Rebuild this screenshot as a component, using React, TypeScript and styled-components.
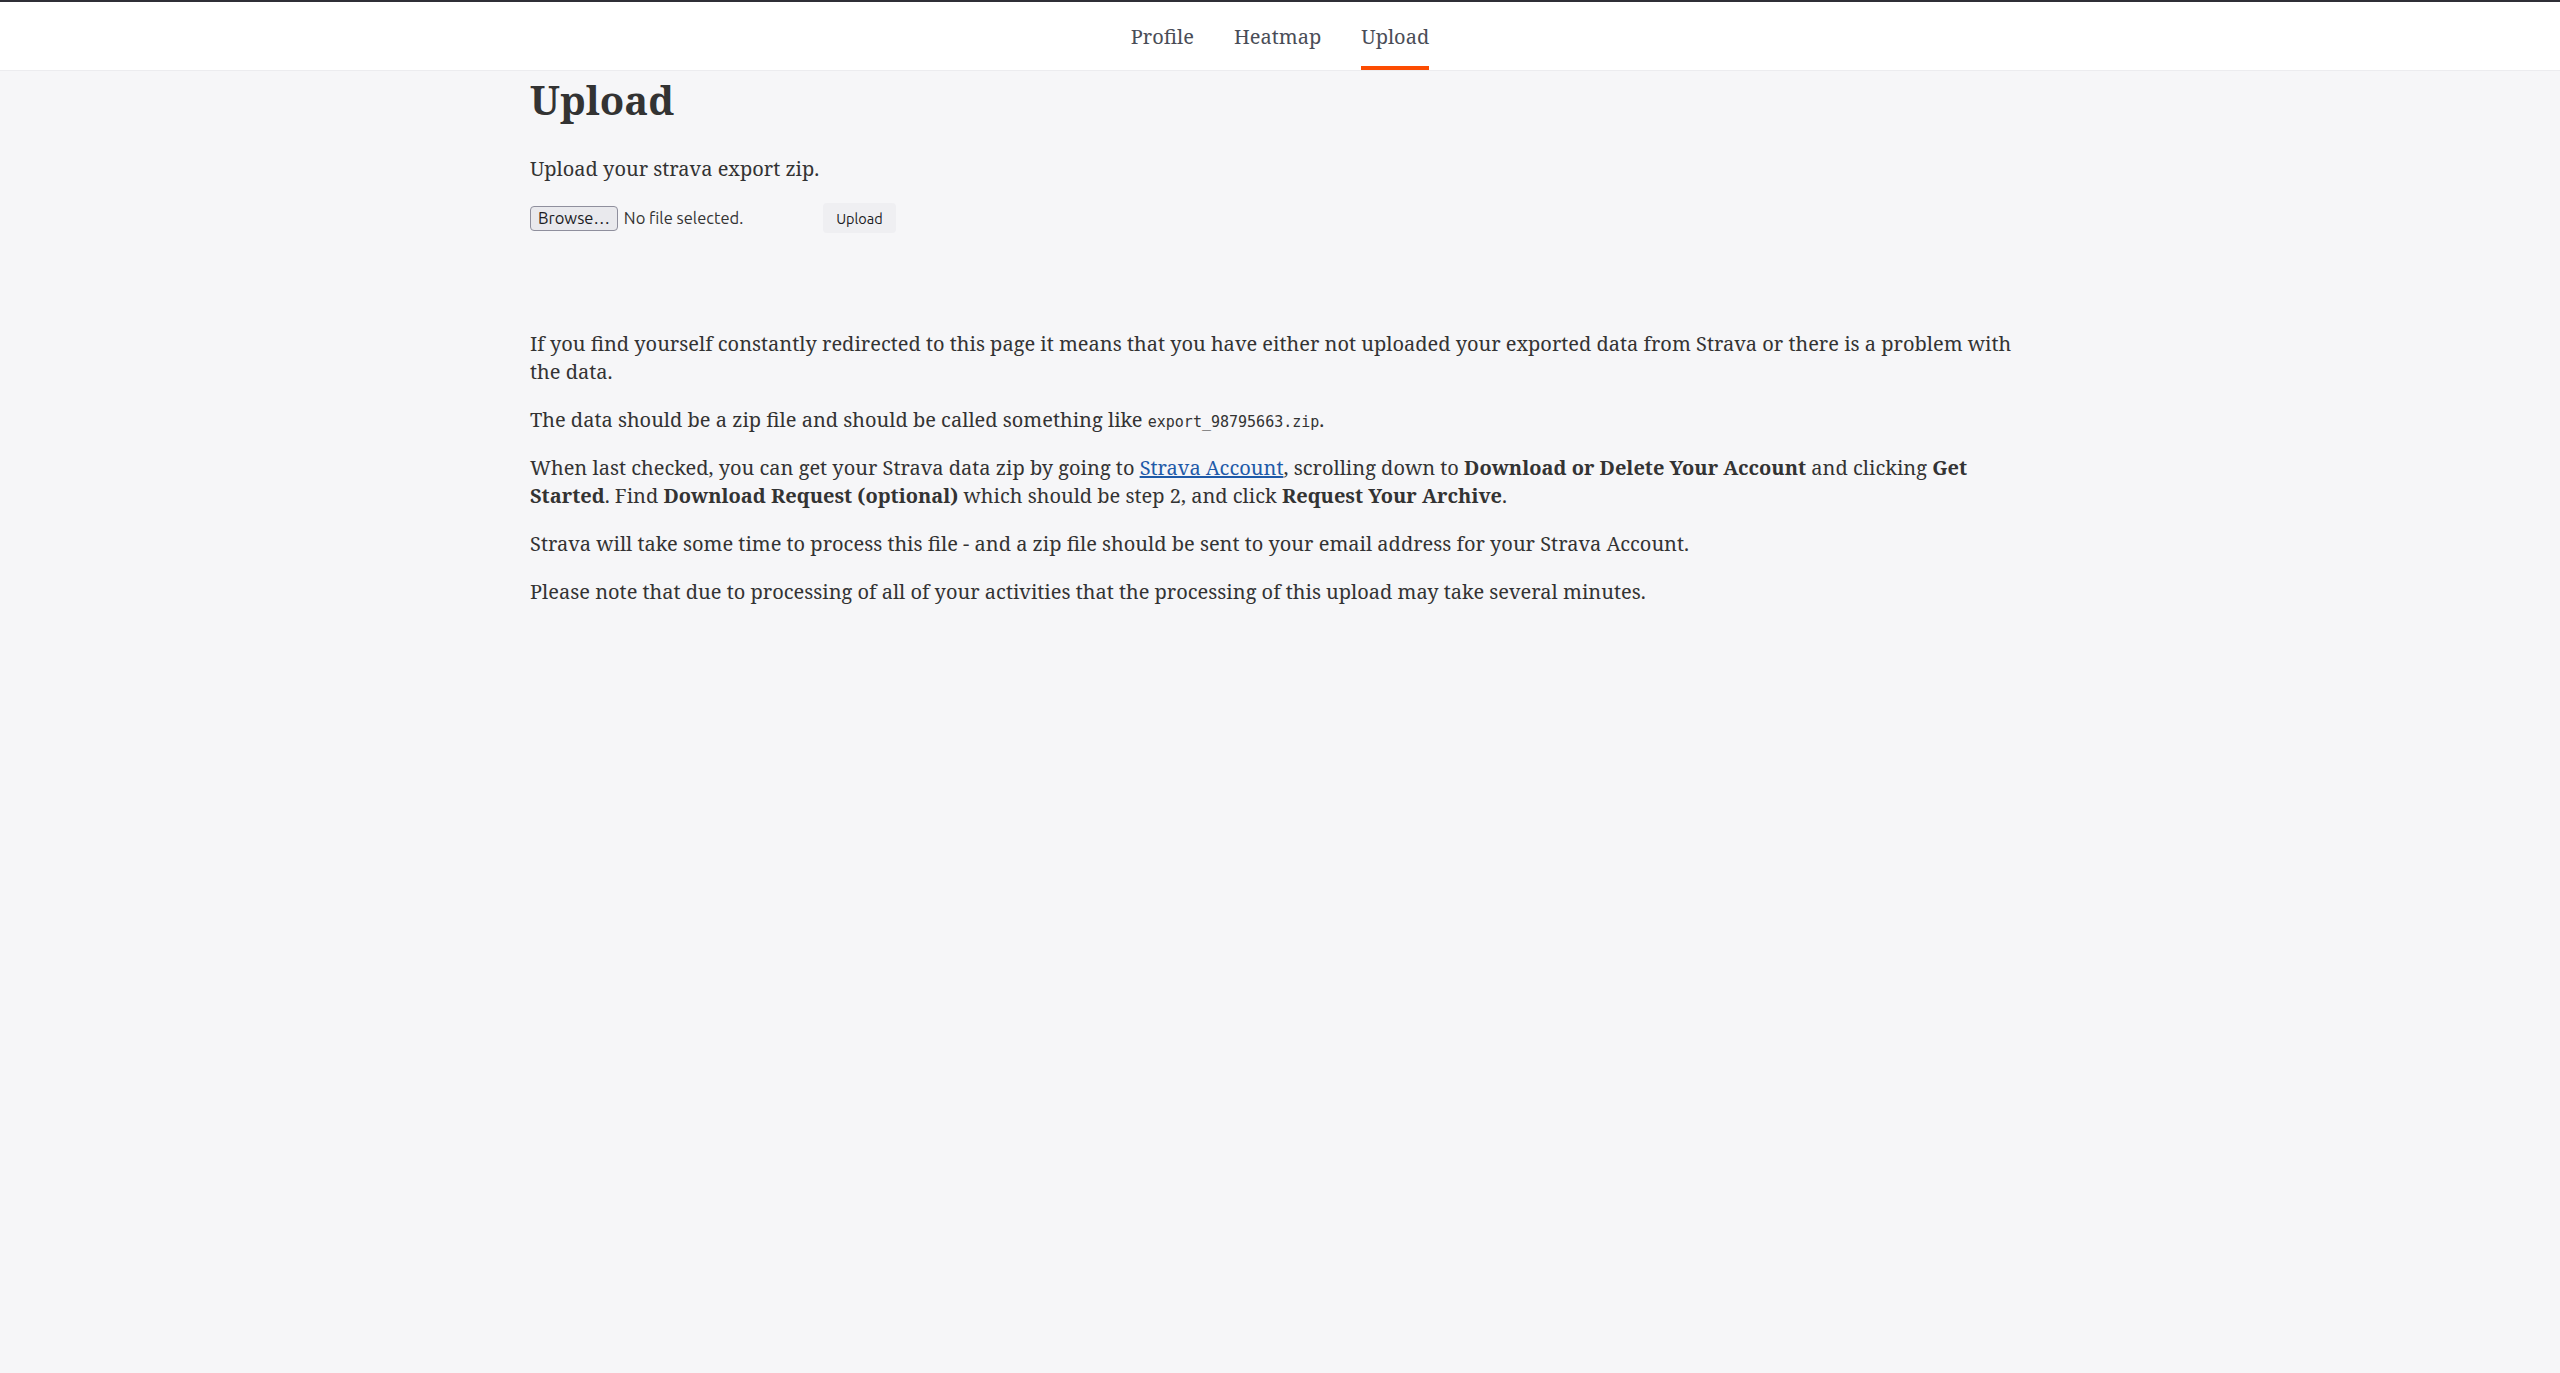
import React from "react";
import styled, { createGlobalStyle } from "styled-components";

const GlobalStyle = createGlobalStyle`
  html, body {
    margin: 0;
    padding: 0;
    background: #f6f6f8;
  }
  body {
    font-family: "Noto Serif", "DejaVu Serif", "Liberation Serif", serif;
    color: #333;
  }
`;

const Page = styled.div`
  min-height: 1373px;
  background: #f6f6f8;
`;

const NavBar = styled.nav`
  background: #ffffff;
  border-top: 2px solid #2f2f36;
  border-bottom: 1px solid #ececef;
  height: 68px;
  display: flex;
  justify-content: center;
  align-items: stretch;
  gap: 40px;
`;

const NavItem = styled.a<{ $active?: boolean }>`
  display: flex;
  align-items: center;
  font-size: 20px;
  color: #4a4d57;
  text-decoration: none;
  border-bottom: 4px solid ${(p) => (p.$active ? "#fc4c02" : "transparent")};
  padding-top: 4px;
  box-sizing: border-box;
`;

const Main = styled.main`
  max-width: 1500px;
  margin: 0 auto;
`;

const Title = styled.h1`
  font-size: 40px;
  font-weight: 700;
  line-height: 57px;
  margin: 0 0 27px 0;
  color: #333;
`;

const Intro = styled.p`
  font-size: 20px;
  line-height: 28px;
  margin: 0 0 20px 0;
`;

const UploadForm = styled.form`
  display: flex;
  align-items: center;
  height: 30px;
  margin-bottom: 97px;
`;

const FileField = styled.label`
  display: flex;
  align-items: center;
  gap: 6px;
  width: 293px;
  font-family: "Ubuntu", "Noto Sans", "Open Sans", sans-serif;
  font-size: 16.5px;
  color: #333;
`;

const BrowseButton = styled.span`
  display: inline-flex;
  align-items: center;
  height: 25px;
  box-sizing: border-box;
  padding: 0 7px;
  border: 1px solid #8f8f9d;
  border-radius: 4px;
  background: #e9e9ed;
  color: #1b1b1f;
  font-size: 16.5px;
`;

const SubmitButton = styled.button`
  font-family: "Ubuntu", "Noto Sans", "Open Sans", sans-serif;
  font-size: 14.5px;
  color: #1b1b1f;
  background: #efeff2;
  border: none;
  border-radius: 4px;
  height: 30px;
  width: 73px;
  padding: 0;
`;

const Text = styled.p`
  font-size: 20px;
  line-height: 28px;
  margin: 0 0 20px 0;
`;

const Code = styled.code`
  font-family: "DejaVu Sans Mono", "Liberation Mono", monospace;
  font-size: 15px;
  line-height: 1;
`;

const Link = styled.a`
  color: #1f5aa8;
  text-decoration: underline;
`;

export default function App() {
  return (
    <Page>
      <GlobalStyle />
      <NavBar>
        <NavItem href="#">Profile</NavItem>
        <NavItem href="#">Heatmap</NavItem>
        <NavItem href="#" $active>
          Upload
        </NavItem>
      </NavBar>
      <Main>
        <Title>Upload</Title>
        <Intro>Upload your strava export zip.</Intro>
        <UploadForm onSubmit={(e) => e.preventDefault()}>
          <FileField>
            <BrowseButton>Browse…</BrowseButton>
            <span>No file selected.</span>
          </FileField>
          <SubmitButton type="submit">Upload</SubmitButton>
        </UploadForm>
        <Text>
          If you find yourself constantly redirected to this page it means that you have either not
          uploaded your exported data from Strava or there is a problem with the data.
        </Text>
        <Text>
          The data should be a zip file and should be called something like{" "}
          <Code>export_98795663.zip</Code>.
        </Text>
        <Text>
          When last checked, you can get your Strava data zip by going to{" "}
          <Link href="#">Strava Account</Link>, scrolling down to{" "}
          <strong>Download or Delete Your Account</strong> and clicking <strong>Get Started</strong>.
          Find <strong>Download Request (optional)</strong> which should be step 2, and click{" "}
          <strong>Request Your Archive</strong>.
        </Text>
        <Text>
          Strava will take some time to process this file - and a zip file should be sent to your
          email address for your Strava Account.
        </Text>
        <Text>
          Please note that due to processing of all of your activities that the processing of this
          upload may take several minutes.
        </Text>
      </Main>
    </Page>
  );
}
